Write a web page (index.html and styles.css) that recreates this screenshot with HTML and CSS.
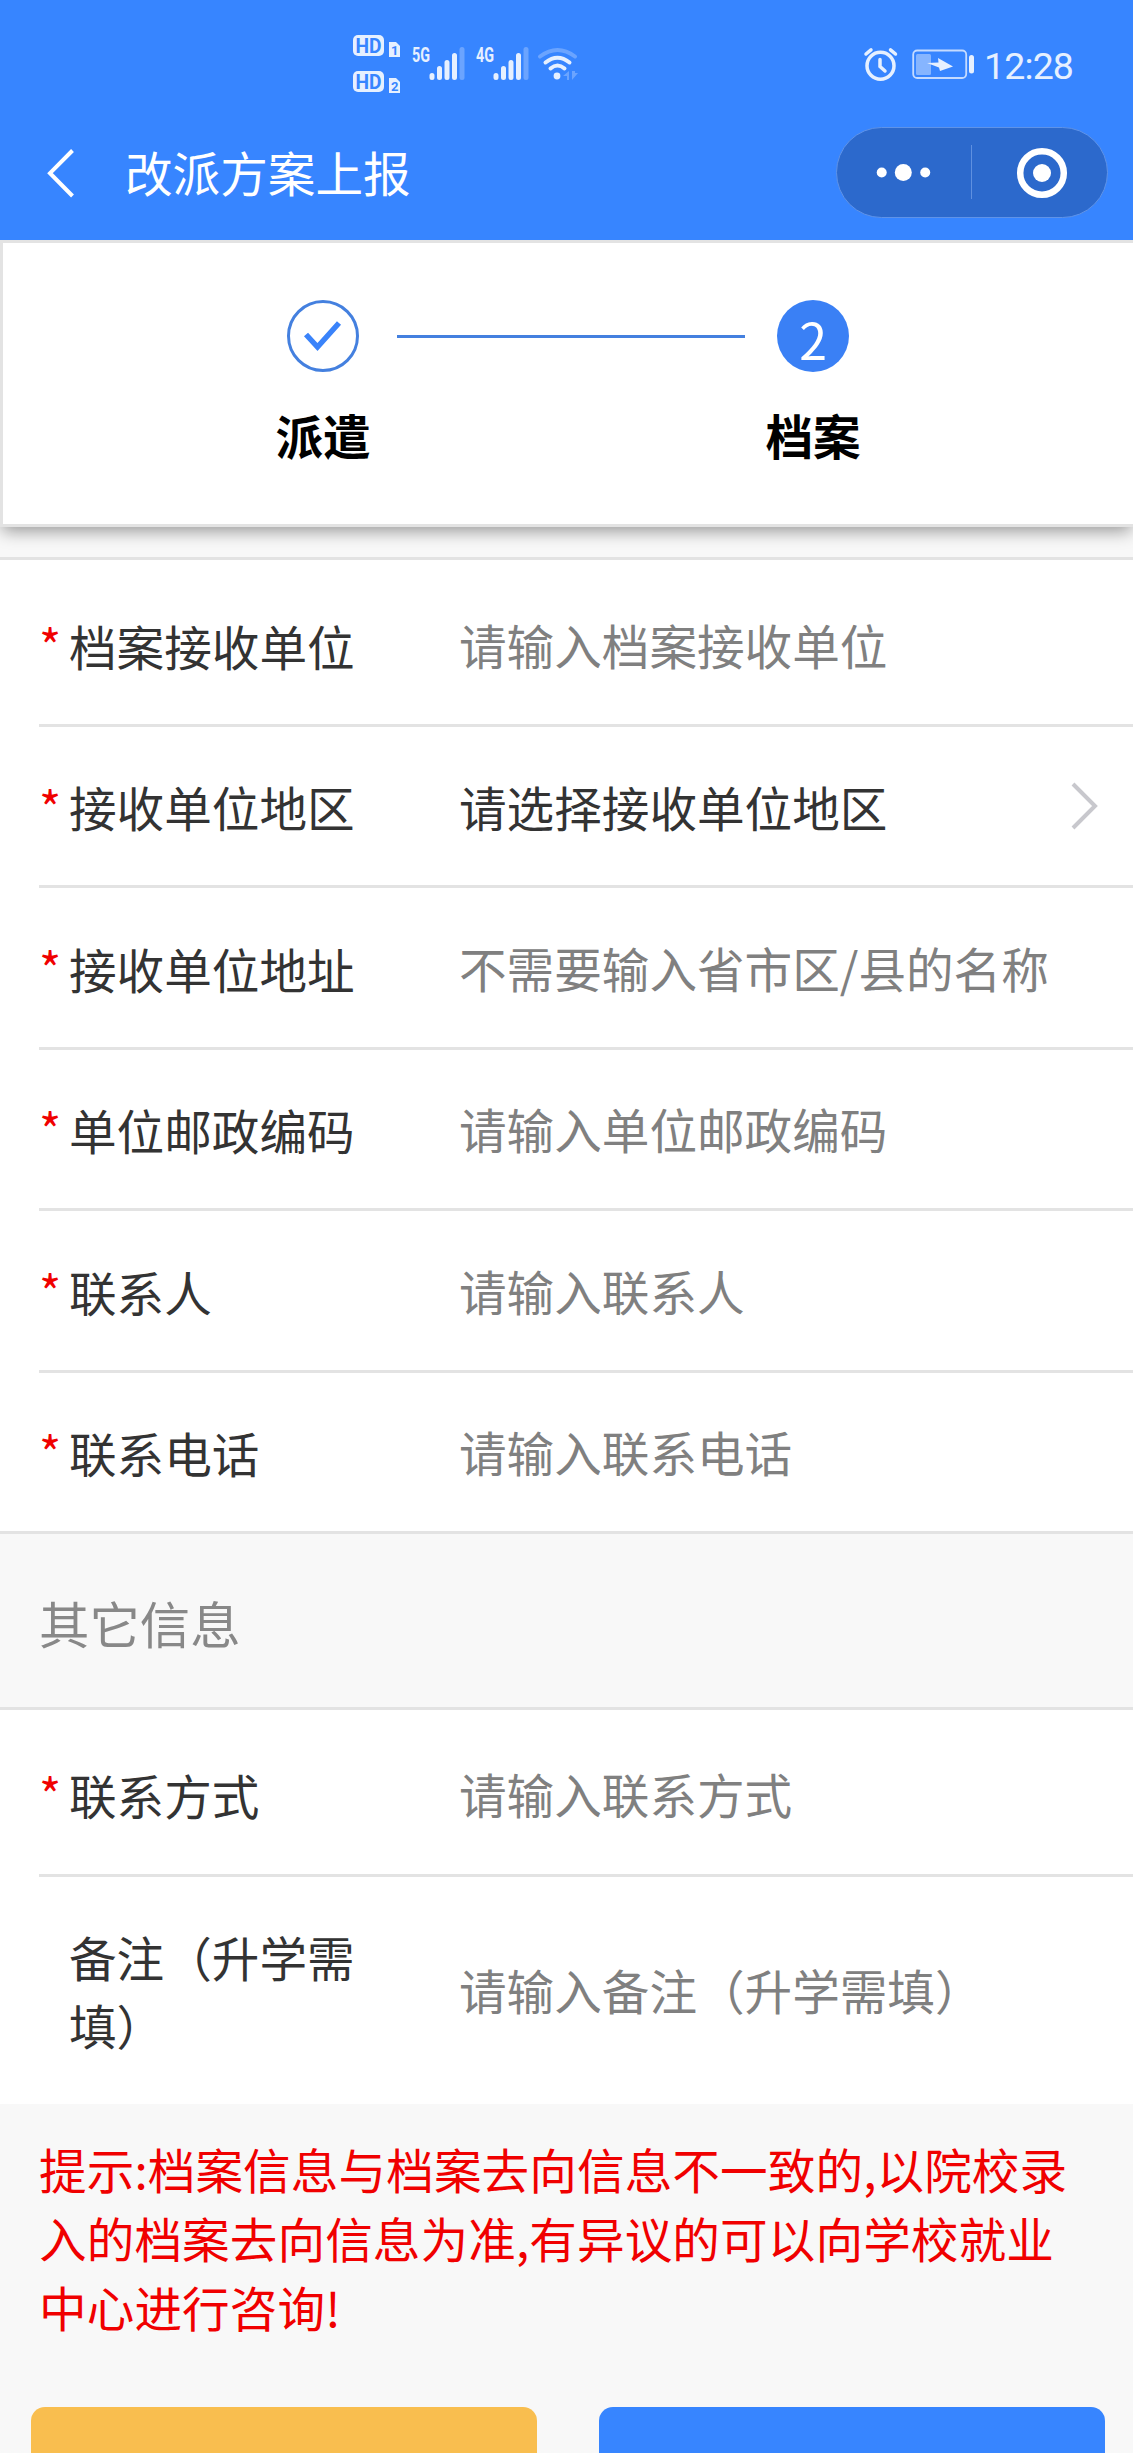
FILE: index.html
```html
<!DOCTYPE html>
<html lang="zh-CN">
<head>
    <meta charset="UTF-8">
    <meta name="viewport" content="width=device-width, initial-scale=1.0">
    <title>改派方案上报</title>
    <link rel="stylesheet" href="styles.css">
</head>
<body>
    <header class="header">
        <div class="status-bar">
            <!-- HD, signal and wifi -->
            <svg class="status-left" width="240" height="70" viewBox="350 30 240 70">
                <rect x="353" y="35" width="31" height="21" rx="5" fill="#e6f0ff"/>
                <text class="hd" x="355.5" y="52.5" textLength="26" lengthAdjust="spacingAndGlyphs">HD</text>
                <path d="M389 42h7l4 4v11h-11z" fill="#e6f0ff"/>
                <text class="sim" x="391" y="55">1</text>
                <rect x="353" y="71" width="31" height="21" rx="5" fill="#e6f0ff"/>
                <text class="hd" x="355.5" y="88.5" textLength="26" lengthAdjust="spacingAndGlyphs">HD</text>
                <path d="M389 78h7l4 4v11h-11z" fill="#e6f0ff"/>
                <text class="sim" x="391" y="91">2</text>

                <text class="net" x="412" y="61.5" textLength="18" lengthAdjust="spacingAndGlyphs">5G</text>
                <g stroke="#e6f0ff" stroke-width="5" stroke-linecap="round">
                    <path d="M432 75.5v2M439.5 68.500v9M447 62.500v15M454.500 55.500v22"/>
                    <path d="M462 49.500v28" stroke-opacity=".3"/>
                </g>
                <text class="net" x="476" y="61.5" textLength="18" lengthAdjust="spacingAndGlyphs">4G</text>
                <g stroke="#e6f0ff" stroke-width="5" stroke-linecap="round">
                    <path d="M496 75.5v2M503.500 68.500v9M511 62.500v15M518.500 55.500v22"/>
                    <path d="M526 49.500v28" stroke-opacity=".3"/>
                </g>

                <g fill="none" stroke="#e6f0ff" stroke-width="4" stroke-linecap="round">
                    <path d="M540 56.500Q557.500 43.500 575 56.500" stroke-opacity=".3"/>
                    <path d="M545.500 62.500Q557.500 53 569.500 62.500"/>
                    <path d="M550.500 68.500Q557.500 62.500 564.500 68.500"/>
                </g>
                <circle cx="557" cy="76" r="3.400" fill="#e6f0ff"/>
                <path d="M563 76l6-5v9h-2v-4zM572 71v9l6-7h-3v-2z" fill="#e6f0ff" fill-opacity=".3"/>
            </svg>
            <div class="status-right">
                <svg width="112" height="36" viewBox="863 46 112 36">
                    <g fill="none" stroke="#e6f0ff" stroke-width="3.500" stroke-linecap="round">
                        <circle cx="880.500" cy="64.700" r="13.500"/>
                        <path d="M880 58.500v7l5 4.500"/>
                        <path d="M866 53l5-4.200M890.500 48.800l5 4.200"/>
                    </g>
                    <rect x="913.200" y="49.500" width="53" height="27.500" rx="4" fill="none" stroke="#c5dbff" stroke-width="1.800"/>
                    <rect x="916" y="53" width="15" height="21" rx="1.500" fill="#86b5ff"/>
                    <path d="M927 62l11.500-.5-.5-4.500 15 8.500-13 4.500-1-3.500z" fill="#e6f0ff"/>
                    <rect x="969" y="54" width="5" height="18.500" rx="2.500" fill="#e6f0ff"/>
                </svg>
                <span class="time">12:28</span>
            </div>
        </div>
        <div class="nav-bar">
            <svg class="back" width="30" height="54" viewBox="46 145 30 54">
                <path d="M72.500 149.500L50 172.200 72.500 195" fill="none" stroke="#fff" stroke-width="4"/>
            </svg>
            <h1>改派方案上报</h1>
            <div class="capsule">
                <svg width="270" height="89" viewBox="837 128 270 89">
                    <g fill="#fff">
                        <circle cx="881.700" cy="172.500" r="5"/>
                        <circle cx="903.300" cy="172.500" r="8.500"/>
                        <circle cx="925.200" cy="172.500" r="5"/>
                        <circle cx="1042" cy="173" r="9"/>
                    </g>
                    <path d="M971.500 145v54" stroke="#5f90e0"/>
                    <circle cx="1042" cy="173" r="21.800" fill="none" stroke="#fff" stroke-width="6.500"/>
                </svg>
            </div>
        </div>
    </header>

    <div class="steps">
        <div class="step">
            <div class="step-icon done">
                <svg width="40" height="40" viewBox="0 0 40 40">
                    <path d="M3 18.500L14.500 31 36 7" fill="none" stroke="#3a83fa" stroke-width="5.500"/>
                </svg>
            </div>
            <p>派遣</p>
        </div>
        <div class="step-line"></div>
        <div class="step">
            <div class="step-icon">2</div>
            <p>档案</p>
        </div>
    </div>

    <div class="form">
        <div class="cell">
            <span class="star">*</span>
            <label>档案接收单位</label>
            <span class="value">请输入档案接收单位</span>
        </div>
        <div class="cell">
            <span class="star">*</span>
            <label>接收单位地区</label>
            <span class="value selected">请选择接收单位地区</span>
            <svg class="arrow" width="28" height="48" viewBox="0 0 28 48">
                <path d="M2 2L24 24 2 46" fill="none" stroke="#c8c8cd" stroke-width="4"/>
            </svg>
        </div>
        <div class="cell">
            <span class="star">*</span>
            <label>接收单位地址</label>
            <span class="value">不需要输入省市区/县的名称</span>
        </div>
        <div class="cell">
            <span class="star">*</span>
            <label>单位邮政编码</label>
            <span class="value">请输入单位邮政编码</span>
        </div>
        <div class="cell">
            <span class="star">*</span>
            <label>联系人</label>
            <span class="value">请输入联系人</span>
        </div>
        <div class="cell">
            <span class="star">*</span>
            <label>联系电话</label>
            <span class="value">请输入联系电话</span>
        </div>
    </div>

    <h2 class="section-title">其它信息</h2>

    <div class="form form-other">
        <div class="cell">
            <span class="star">*</span>
            <label>联系方式</label>
            <span class="value">请输入联系方式</span>
        </div>
        <div class="cell remark">
            <span class="star"></span>
            <label>备注（升学需填）</label>
            <span class="value">请输入备注（升学需填）</span>
        </div>
    </div>

    <p class="tips">提示:档案信息与档案去向信息不一致的,以院校录入的档案去向信息为准,有异议的可以向学校就业中心进行咨询!</p>

    <div class="buttons">
        <div class="btn btn-prev"></div>
        <div class="btn btn-submit"></div>
    </div>
</body>
</html>
```
FILE: styles.css
```css
* {
    margin: 0;
    padding: 0;
    box-sizing: border-box;
}

body {
    height: 2453px;
    overflow: hidden;
    font-family: "Noto Sans CJK SC", sans-serif;
    font-size: 47.6px;
    color: #333;
    background-color: #f8f8f8;
}

svg {
    display: block;
    flex: none;
}

/* Header */
.header {
    position: relative; /* stays above the shadow of the steps card */
    z-index: 1;
    height: 240px;
    background-color: #3785ff;
    color: #fff;
}

.status-bar {
    display: flex;
    justify-content: space-between;
    height: 127px;
    padding: 30px 60px 0 350px;
}

.status-right {
    display: flex;
    align-items: center;
    gap: 9px;
    height: 70px;
}

.hd {
    font: bold 20px Roboto, sans-serif;
    fill: #3785ff;
}

.sim {
    font: bold 13px Roboto, sans-serif;
    fill: #3785ff;
}

.net {
    font: bold 20px Roboto, sans-serif;
    fill: #e6f0ff;
}

.time {
    font-family: Roboto, sans-serif;
    font-size: 37.5px;
    letter-spacing: -0.9px;
    padding-top: 1px;
    color: #e6f0ff;
}

.nav-bar {
    display: flex;
    align-items: center;
    height: 91px;
    padding: 0 25px 0 46px;
}

.nav-bar h1 {
    flex: 1;
    margin-left: 49px;
    padding-bottom: 1px;
    font-size: 47.6px;
    font-weight: normal;
    line-height: 70px;
}

.capsule {
    border: 1px solid #5f93e8;
    border-radius: 46px;
    background-color: #2c69cc;
}

/* Steps */
.steps {
    display: flex;
    justify-content: center;
    height: 287px;
    padding-top: 57px;
    border: 3px solid #e3e3e3;
    border-right: none;
    background-color: #fff;
    box-shadow: 0 6px 16px -2px rgba(0, 0, 0, 0.4);
}

.step {
    width: 142px;
    text-align: center;
    color: #000;
}

.step-icon {
    display: flex;
    align-items: center;
    justify-content: center;
    width: 72px;
    height: 72px;
    margin: 0 auto;
    padding-top: 3px;
    border-radius: 50%;
    background-color: #3a80f5;
    color: #fff;
    font-size: 50px;
    line-height: 72px;
}

.step-icon.done {
    padding-top: 0;
    border: 3px solid #4480df;
    background-color: #fff;
}

.step p {
    margin-top: 28px;
    font-weight: bold;
    line-height: 70px;
}

.step-line {
    width: 348px;
    height: 3px;
    margin: 35px -3px 0 3px;
    background-color: #4480df;
}

/* Form */
.form {
    margin-top: 30px;
    padding-left: 39px;
    border-top: 3px solid #e3e3e3;
    border-bottom: 3px solid #e3e3e3;
    background-color: #fff;
}

.cell {
    display: flex;
    align-items: center;
    height: 161.4px;
    padding: 3px 34px 0 0;
    border-bottom: 3px solid #e3e3e3;
}

.cell:first-child {
    height: 167px;
    padding-top: 8px;
}

.cell:last-child {
    height: 158.4px;
    border-bottom: none;
}

.star {
    width: 30px;
    padding-bottom: 2px;
    color: #f00000;
    font-size: 47.6px;
    line-height: 68px;
}

.cell label {
    width: 290px;
    margin-right: 100px;
    line-height: 68.6px;
}

.value {
    flex: 1;
    padding-bottom: 3px;
    color: #808080;
    white-space: nowrap;
}

.value.selected {
    color: #333;
}

.arrow {
    margin-bottom: 4px;
}

.section-title {
    height: 173px;
    padding-left: 39px;
    font-size: 50.4px;
    font-weight: normal;
    line-height: 178px;
    color: #888;
}

.form-other {
    margin-top: 0;
    border-bottom: none;
}

.form-other .cell:first-child {
    padding-top: 7px;
}

.form-other .remark {
    height: 227px;
    padding-top: 2px;
}

/* Tips and buttons */
.tips {
    padding: 31px 39px 0;
    letter-spacing: 0.1px;
    line-height: 68.8px;
    color: #f00000;
}

.buttons {
    display: flex;
    justify-content: space-between;
    margin-top: 66px;
    padding: 0 28px 0 31px;
}

.btn {
    width: 506px;
    height: 130px;
    border-radius: 14px;
}

.btn-prev {
    background-color: #f9be4f;
}

.btn-submit {
    background-color: #3785ff;
}
```
